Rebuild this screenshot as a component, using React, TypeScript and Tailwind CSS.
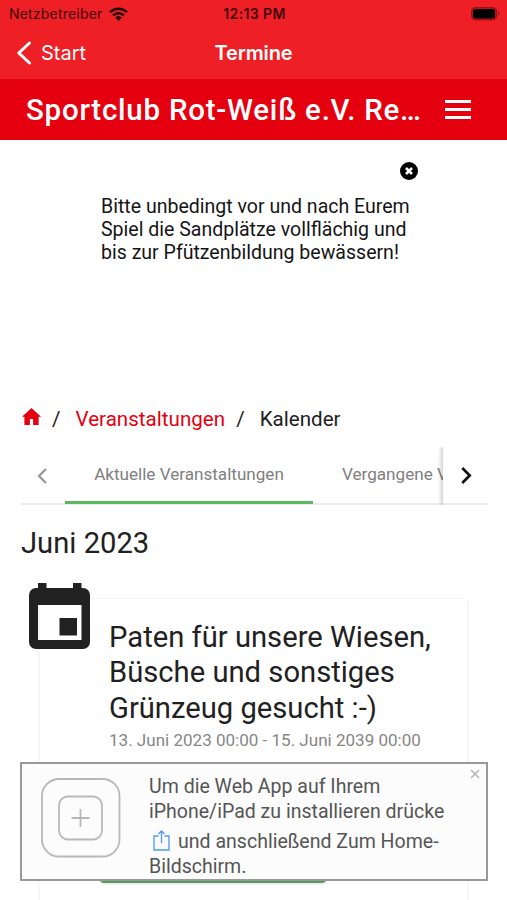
function StatusBar() {
  return (
    <div className="grid h-[27px] grid-cols-3 items-center pr-[7px] pl-[9px] font-['Inter',sans-serif] text-[14px] leading-none text-[#43060a]">
      <div className="flex items-center gap-[6px]">
        <span className="tracking-[0.2px]">Netzbetreiber</span>
        <svg className="h-[14px] w-[19px] shrink-0" viewBox="0 0 19 14" fill="none" stroke="#250205" strokeWidth="2.5">
          <path d="M1 5.2a12.2 12.2 0 0 1 17 0" />
          <path d="M4 8.4a8 8 0 0 1 11 0" />
          <path d="M9.5 14 6.2 10.6a4.8 4.8 0 0 1 6.6 0Z" fill="#250205" stroke="none" />
        </svg>
      </div>
      <span className="text-center font-semibold tracking-[0.4px] whitespace-nowrap">12:13 PM</span>
      <svg className="ml-auto h-[14px] w-[29px]" viewBox="0 0 29 14">
        <rect x="0.6" y="0.6" width="25" height="12.3" rx="4" fill="#b5151e" stroke="#8d1018" />
        <rect x="2" y="2" width="22" height="9.5" rx="2.5" fill="#000" />
        <path d="M27 4.5a3 3 0 0 1 0 4.5Z" fill="#8d1018" />
      </svg>
    </div>
  )
}

function NavBar() {
  return (
    <div className="grid h-[52px] grid-cols-3 items-center px-4 font-['Inter',sans-serif] text-[20px] text-white">
      <a href="#start" className="flex items-center gap-[9px]">
        <svg className="h-6 w-4" viewBox="0 0 16 24" fill="none" stroke="currentColor" strokeWidth="3" strokeLinecap="round" strokeLinejoin="round">
          <path d="M13.5 2 2.8 12l10.7 10" />
        </svg>
        Start
      </a>
      <h1 className="text-center font-semibold tracking-[-0.1px]">Termine</h1>
    </div>
  )
}

function AppBar() {
  return (
    <div className="flex h-[61px] items-center justify-between bg-[#e4000f] pr-9 pl-[26px] text-white">
      <span className="pt-px text-[29.5px] font-medium tracking-[0.75px] whitespace-nowrap">
        Sportclub Rot-Weiß e.V. Re…
      </span>
      <button type="button" aria-label="Menü" className="flex w-[26px] flex-col gap-[5px]">
        <span className="h-[3px] bg-white" />
        <span className="h-[3px] bg-white" />
        <span className="h-[3px] bg-white" />
      </button>
    </div>
  )
}

function Notice() {
  return (
    <section className="h-[257px] pt-[22px] pr-[89px] pl-[101px]">
      <button type="button" aria-label="Schließen" className="ml-auto block size-[18px]">
        <svg viewBox="0 0 18 18">
          <circle cx="9" cy="9" r="9" fill="#000" />
          <path d="m6 6 6 6M12 6l-6 6" stroke="#fff" strokeWidth="2.6" />
        </svg>
      </button>
      <p className="mt-[14.5px] text-[19.55px] leading-[23.4px] whitespace-nowrap text-[#151515]">
        Bitte unbedingt vor und nach Eurem
        <br />
        Spiel die Sandplätze vollflächig und
        <br />
        bis zur Pfützenbildung bewässern!
      </p>
    </section>
  )
}

function Breadcrumbs() {
  return (
    <nav className="flex h-[44px] items-center px-[22px] text-[20.6px] whitespace-nowrap text-[#212121]">
      <svg className="mb-[5px] h-[17px] w-[19px]" viewBox="2 3 20 17" preserveAspectRatio="none" fill="#e4000f">
        <path d="M10.3 20v-6h3.400v6h5.800v-8.300H22L12 3 2 11.700h2.500V20z" />
      </svg>
      <span className="ml-[11px]">/</span>
      <a href="#veranstaltungen" className="ml-[15px] text-[#e4000f]">
        Veranstaltungen
      </a>
      <span className="ml-[11px]">/</span>
      <span className="ml-[15px]">Kalender</span>
    </nav>
  )
}

function Tabs() {
  return (
    <div className="mt-[6px] mr-[19px] ml-[21px] flex h-[58px] text-[17.1px] whitespace-nowrap text-[#808080] shadow-[inset_0_-2px_0_#ececec]">
      <button type="button" aria-label="Zurück" className="flex w-[44px] shrink-0 items-center justify-center pr-[3px]">
        <svg className="h-4 w-[10px]" viewBox="0 0 10 16" fill="none" stroke="#999" strokeWidth="2.3">
          <path d="M9 1 2 8l7 7" />
        </svg>
      </button>
      <div className="flex min-w-0 flex-1 overflow-hidden">
        <button type="button" className="mb-px w-[248px] shrink-0 border-b-3 border-[#5cb860] pt-[2px]">
          Aktuelle Veranstaltungen
        </button>
        <button type="button" className="shrink-0 pb-[2px] pl-[29px]">
          Vergangene V
        </button>
      </div>
      <button type="button" aria-label="Weiter" className="flex w-[45px] shrink-0 items-center justify-center border-b-2 border-[#ececec] bg-white pl-px shadow-[-2px_0_4px_rgba(0,0,0,0.2)] [clip-path:inset(0_0_0_-8px)]">
        <svg className="h-[17px] w-[11px]" viewBox="0 0 10 16" fill="none" stroke="#111" strokeWidth="2.5">
          <path d="m1 1 7 7-7 7" />
        </svg>
      </button>
    </div>
  )
}

function EventCard() {
  return (
    <article className="relative mx-[38px] mt-[37px] h-[400px] rounded-md border-x-2 border-t border-[#f6f6f6] pt-[21px] pl-[69px]">
      <svg className="absolute -top-[16px] -left-[11px] h-[66px] w-[61px]" viewBox="0 0 61 66" fill="#212121">
        <path d="M9 0h8.500v6H9zM44 0h8.500v6H44z" />
        <path fillRule="evenodd" d="M7 5h47a7 7 0 0 1 7 7v47a7 7 0 0 1-7 7H7a7 7 0 0 1-7-7V12a7 7 0 0 1 7-7Zm2 17v35h43.500V22Z" />
        <path d="M30.500 35H48v17.500H30.500z" />
      </svg>
      <h3 className="text-[29.2px] leading-[35.3px] whitespace-nowrap text-[#212121]">
        Paten für unsere Wiesen,
        <br />
        Büsche und sonstiges
        <br />
        Grünzeug gesucht :-)
      </h3>
      <p className="mt-[2px] text-[17.05px] leading-[24px] whitespace-nowrap text-[#868686]">
        13. Juni 2023 00:00 - 15. Juni 2039 00:00
      </p>
      <div className="mt-[91px] -ml-[9px] h-[40px] w-[226px] rounded bg-[#5a9e5d] shadow-sm" />
    </article>
  )
}

function InstallHint() {
  return (
    <aside className="absolute right-[19px] bottom-[19px] left-[20px] flex h-[119px] border-2 border-[#999] bg-[#fcfcfc] text-[19.55px] text-[#555]">
      <svg className="mt-[14px] ml-[19px] size-[80px] shrink-0" viewBox="0 0 80 80" fill="none" stroke="#b8b8b8" strokeWidth="1.8">
        <rect x="1" y="1" width="77.5" height="77.5" rx="17" />
        <rect x="18" y="18.5" width="43" height="43" rx="9" />
        <path d="M39.5 31v18M30.5 40h18" />
      </svg>
      <div className="mt-[11px] ml-[28px] leading-[24.5px] whitespace-nowrap">
        <p>Um die Web App auf Ihrem</p>
        <p>iPhone/iPad zu installieren drücke</p>
        <p className="mt-[6px] flex">
          <svg className="mr-[8px] ml-[4px] h-[21px] w-[17px]" viewBox="0 0 17 21" fill="none" stroke="#4a9bea" strokeWidth="1.3">
            <path d="M5.5 6H1v14h15V6h-4.500M8.500 13V1M5.500 4l3-3 3 3" />
          </svg>
          und anschließend Zum Home-
        </p>
        <p>Bildschirm.</p>
      </div>
      <button type="button" aria-label="Schließen" className="absolute top-[5px] right-[6px]">
        <svg className="size-[10px]" viewBox="0 0 10 10" stroke="#b5b5b5" strokeWidth="1.6">
          <path d="m1 1 8 8M9 1 1 9" />
        </svg>
      </button>
    </aside>
  )
}

export default function App() {
  return (
    <div className="relative h-[900px] w-[507px] overflow-hidden bg-white font-['Roboto',sans-serif]">
      <header className="bg-[#ef1f26]">
        <StatusBar />
        <NavBar />
        <AppBar />
      </header>
      <main>
        <Notice />
        <Breadcrumbs />
        <Tabs />
        <h2 className="mt-[20px] px-[21px] text-[29.2px] leading-[36px] text-[#212121]">Juni 2023</h2>
        <EventCard />
      </main>
      <InstallHint />
    </div>
  )
}
